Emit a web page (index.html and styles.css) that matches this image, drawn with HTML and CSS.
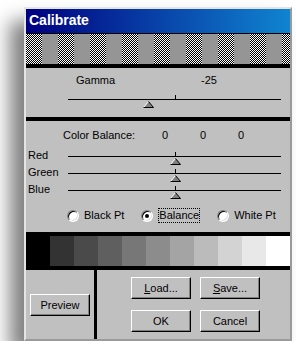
FILE: index.html
```html
<!DOCTYPE html>
<html lang="en">
<head>
    <meta charset="UTF-8">
    <meta name="viewport" content="width=device-width, initial-scale=1.0">
    <title>Calibrate</title>
    <link rel="stylesheet" href="styles.css">
</head>
<body>
    <div class="window">
        <div class="titlebar">Calibrate</div>
        <div class="checker"></div>

        <div class="gamma">
            <div class="gamma-head">
                <span class="gamma-label">Gamma</span>
                <span>-25</span>
            </div>
            <div class="slider">
                <span class="tick"></span>
                <svg class="thumb" style="left: 37.5%" width="11" height="7" viewBox="0 0 11 7">
                    <polygon points="5.5,0.5 10.5,6.5 0.5,6.5" fill="#808080"/>
                    <path d="M0.5 6.5 L5.5 0.5" stroke="#fff" fill="none"/>
                    <path d="M5.5 0.5 L10.5 6.5 L0.5 6.5" stroke="#000" fill="none"/>
                </svg>
            </div>
        </div>

        <div class="balance">
            <div class="balance-head">
                <span>Color Balance:</span>
                <span>0</span>
                <span>0</span>
                <span>0</span>
            </div>

            <div class="channels">
                <span class="channel-name">Red</span>
                <div class="slider">
                    <span class="tick"></span>
                    <svg class="thumb" style="left: 50%" width="11" height="7" viewBox="0 0 11 7">
                        <polygon points="5.5,0.5 10.5,6.5 0.5,6.5" fill="#808080"/>
                        <path d="M0.5 6.5 L5.5 0.5" stroke="#fff" fill="none"/>
                        <path d="M5.5 0.5 L10.5 6.5 L0.5 6.5" stroke="#000" fill="none"/>
                    </svg>
                </div>
                <span class="channel-name">Green</span>
                <div class="slider">
                    <span class="tick"></span>
                    <svg class="thumb" style="left: 50%" width="11" height="7" viewBox="0 0 11 7">
                        <polygon points="5.5,0.5 10.5,6.5 0.5,6.5" fill="#808080"/>
                        <path d="M0.5 6.5 L5.5 0.5" stroke="#fff" fill="none"/>
                        <path d="M5.5 0.5 L10.5 6.5 L0.5 6.5" stroke="#000" fill="none"/>
                    </svg>
                </div>
                <span class="channel-name">Blue</span>
                <div class="slider">
                    <span class="tick"></span>
                    <svg class="thumb" style="left: 50%" width="11" height="7" viewBox="0 0 11 7">
                        <polygon points="5.5,0.5 10.5,6.5 0.5,6.5" fill="#808080"/>
                        <path d="M0.5 6.5 L5.5 0.5" stroke="#fff" fill="none"/>
                        <path d="M5.5 0.5 L10.5 6.5 L0.5 6.5" stroke="#000" fill="none"/>
                    </svg>
                </div>
            </div>

            <div class="points">
                <label class="point"><span class="radio"></span>Black Pt</label>
                <label class="point"><span class="radio checked"></span><span class="focus">Balance</span></label>
                <label class="point"><span class="radio"></span>White Pt</label>
            </div>
        </div>

        <div class="ramp">
            <span style="background: #000000"></span>
            <span style="background: #333333"></span>
            <span style="background: #4a4a4a"></span>
            <span style="background: #5f5f5f"></span>
            <span style="background: #777777"></span>
            <span style="background: #8c8c8c"></span>
            <span style="background: #a4a4a4"></span>
            <span style="background: #bbbbbb"></span>
            <span style="background: #d3d3d3"></span>
            <span style="background: #e8e8e8"></span>
            <span style="background: #ffffff"></span>
        </div>

        <div class="actions">
            <div class="preview-box">
                <button class="btn">Preview</button>
            </div>
            <div class="divider"></div>
            <div class="file-btns">
                <button class="btn"><u>L</u>oad...</button>
                <button class="btn"><u>S</u>ave...</button>
                <button class="btn">OK</button>
                <button class="btn">Cancel</button>
            </div>
        </div>
    </div>
</body>
</html>
```

FILE: styles.css
```css
body{
  margin: 0;
  background-color: #ffffff;
  font-family: "Liberation Sans", Arial, sans-serif;
  font-size: 11px;
  color: #000;
}

.window{
  width: 264px;
  margin: 7px 0 0 24px;
  border: 2px solid;
  border-color: #e4e4e4 #9a9a9a #9a9a9a #e4e4e4;
  background-color: #c0c0c0;
  box-shadow: -14px 14px 18px rgba(0, 0, 0, 0.5);
}

.titlebar{
  height: 24px;
  line-height: 22px;
  padding-left: 3px;
  box-sizing: border-box;
  background: linear-gradient(90deg, #000080, #1084d0);
  color: #fff;
  font-weight: bold;
  font-size: 14px;
}

/* dithered 50% columns next to flat grey */
.checker{
  height: 30px;
  border-top: 1px solid #000;
  background:
    repeating-linear-gradient(90deg, transparent 0 16px, #959595 16px 32px),
    repeating-conic-gradient(#000 0 25%, #fff 0 50%) 0 0 / 2px 2px;
}

.gamma{
  height: 53px;
  box-sizing: border-box;
  border-top: 4px solid #000;
  padding-top: 6px;
}

.gamma-head{
  display: flex;
  line-height: 13px;
  padding-left: 50px;
}

.gamma-label{
  width: 125px;
}

.slider{
  position: relative;
  height: 1px;
  background-color: #000;
}

.gamma .slider{
  margin: 12px 0 0 42px;
  width: 213px;
}

.tick{
  position: absolute;
  left: 50%;
  top: -4px;
  width: 1px;
  height: 4px;
  background-color: #000;
}

.thumb{
  position: absolute;
  top: 2px;
  margin-left: -5px;
}

.balance{
  height: 115px;
  box-sizing: border-box;
  border-top: 4px solid #000;
  padding-top: 8px;
}

.balance-head{
  display: grid;
  grid-template-columns: 99px 38px 38px 38px;
  padding-left: 37px;
  line-height: 13px;
}

.channels{
  display: grid;
  grid-template-columns: 40px 213px;
  grid-auto-rows: 17px;
  margin-top: 7px;
  padding-left: 2px;
}

.channel-name{
  line-height: 13px;
}

.channels .slider{
  margin-top: 7px;
}

.points{
  display: flex;
  gap: 17px;
  margin-top: 8px;
  padding-left: 41px;
  line-height: 15px;
}

.point{
  display: flex;
  align-items: center;
  gap: 5px;
}

.radio{
  position: relative;
  width: 12px;
  height: 12px;
  box-sizing: border-box;
  border-radius: 50%;
  border: 1px solid;
  border-color: #808080 #ffffff #ffffff #808080;
  background-color: #fff;
  box-shadow: inset 1px 1px 0 #000, inset -1px -1px 0 #dfdfdf;
}

.radio.checked::after{
  content: "";
  position: absolute;
  left: 3px;
  top: 3px;
  width: 4px;
  height: 4px;
  border-radius: 50%;
  background-color: #000;
}

.focus{
  border: 1px dotted #000;
  line-height: 13px;
}

.ramp{
  display: grid;
  grid-template-columns: repeat(11, 24px);
  height: 30px;
  border-top: 4px solid #000;
  border-bottom: 4px solid #000;
}

.actions{
  display: flex;
  height: 69px;
}

.preview-box{
  width: 68px;
  display: flex;
  align-items: center;
  justify-content: center;
}

.divider{
  width: 3px;
  background-color: #000;
}

.file-btns{
  display: grid;
  grid-template-columns: 60px 60px;
  grid-auto-rows: 22px;
  column-gap: 9px;
  row-gap: 11px;
  padding: 7px 0 0 34px;
}

.btn{
  width: 60px;
  height: 22px;
  padding: 0;
  font-family: "Liberation Sans", Arial, sans-serif;
  font-size: 11px;
  color: #000;
  background-color: #c0c0c0;
  border: 1px solid;
  border-color: #ffffff #000000 #000000 #ffffff;
  box-shadow: inset -1px -1px 0 #808080;
}
```
